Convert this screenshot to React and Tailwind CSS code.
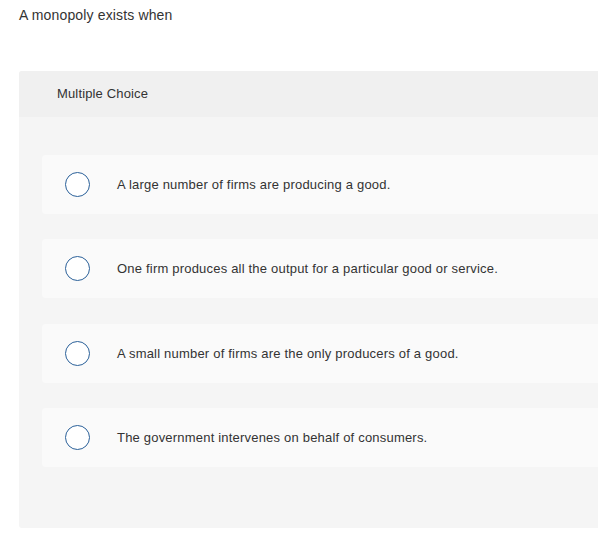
import React from "react";

const choices = [
  "A large number of firms are producing a good.",
  "One firm produces all the output for a particular good or service.",
  "A small number of firms are the only producers of a good.",
  "The government intervenes on behalf of consumers.",
];

export default function App() {
  return (
    <div className="w-[598px] h-[552px] overflow-hidden bg-white text-[#333] font-['Liberation_Sans',Arial,sans-serif]">
      <p className="pl-[19px] pt-[7px] text-[14px] leading-[17px] tracking-[0.15px]">A monopoly exists when</p>
      <div className="ml-[19px] mt-[47px] w-[600px] rounded-[3px] bg-[#f5f5f5]">
        <div className="h-[46px] flex items-center pl-[38px] rounded-t-[3px] bg-[#f0f0f0] text-[13px] tracking-[0.15px]">
          Multiple Choice
        </div>
        <div className="pt-[38px] pb-[61px] pl-[23px] flex flex-col gap-[25.4px]">
          {choices.map((c) => (
            <div key={c} className="h-[59px] flex items-center rounded-[4px] bg-[#fafafa]">
              <span className="ml-[23px] w-[25px] h-[25px] rounded-full border-[1.5px] border-[#2a6099] bg-white shrink-0" />
              <span className="ml-[27px] text-[13px] tracking-[0.2px]">{c}</span>
            </div>
          ))}
        </div>
      </div>
    </div>
  );
}
